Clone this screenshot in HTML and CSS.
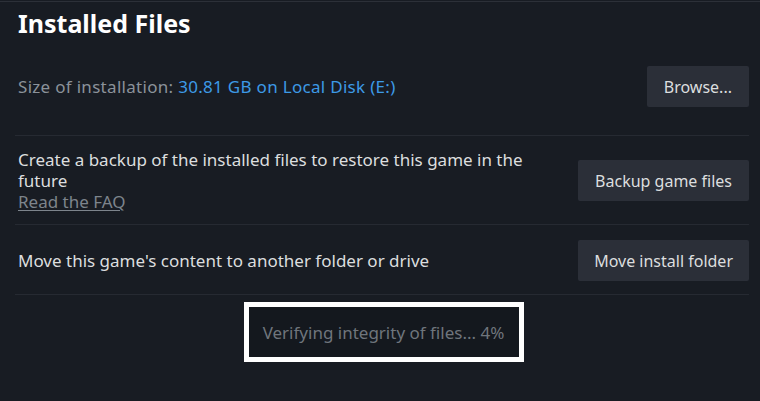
FILE: index.html
```html
<!DOCTYPE html>
<html>
<head>
<meta charset="utf-8">
<link rel="stylesheet" href="styles.css">
</head>
<body>
<div class="topline"></div>
<main class="panel">
  <h1 class="title">Installed Files</h1>
  <section class="row row-size">
    <div class="label">Size of installation: <span class="accent">30.81 GB on Local Disk (E:)</span></div>
    <button class="btn">Browse...</button>
  </section>
  <section class="row row-backup">
    <div class="text">Create a backup of the installed files to restore this game in the future<br><a class="faq">Read the FAQ</a></div>
    <button class="btn">Backup game files</button>
  </section>
  <section class="row row-move">
    <div class="text">Move this game's content to another folder or drive</div>
    <button class="btn btn-move">Move install folder</button>
  </section>
  <div class="status">
    <div class="status-box">Verifying integrity of files... 4%</div>
  </div>
</main>
</body>
</html>
```
FILE: styles.css
```css
html, body {
  margin: 0;
  padding: 0;
  background: #181c23;
  height: 100%;
  overflow: hidden;
}
body {
  font-family: "Noto Sans", "Open Sans", sans-serif;
  color: #dcdedf;
}
.topline {
  height: 1px;
  margin-top: 1px;
  background: #2c3038;
}
.panel {
  padding: 0 11px 0 18px;
}
.title {
  margin: 0;
  padding-top: 4px;
  font-size: 25px;
  line-height: 34px;
  font-weight: 700;
  color: #ffffff;
}
.row {
  display: flex;
  align-items: center;
  justify-content: space-between;
  border-bottom: 1px solid #262a32;
  margin-left: -3px;
  padding-left: 3px;
  font-size: 17px;
  line-height: 21px;
}
.row-size {
  padding-top: 26px;
  padding-bottom: 28px;
}
.row-backup {
  padding-top: 13px;
  padding-bottom: 12px;
}
.row-move {
  padding-top: 15px;
  padding-bottom: 13px;
}
.label {
  color: #8b929a;
  letter-spacing: 0.3px;
}
.accent {
  color: #3d9ae6;
}
.text {
  max-width: 530px;
}
.faq {
  color: #7d848c;
  text-decoration: underline;
  text-underline-offset: 2px;
}
.btn {
  font-family: inherit;
  font-size: 16px;
  color: #dcdedf;
  background: #2b2f38;
  border: none;
  border-radius: 2px;
  height: 41px;
  padding: 0 17px;
  flex-shrink: 0;
}
.btn-move {
  padding: 0 16px;
}
.status {
  display: flex;
  justify-content: center;
  padding-top: 7px;
}
.status-box {
  border: 5px solid #ffffff;
  background: #14181e;
  width: 270px;
  height: 50px;
  display: flex;
  align-items: center;
  justify-content: center;
  color: #6f757c;
  font-size: 17px;
}
```
